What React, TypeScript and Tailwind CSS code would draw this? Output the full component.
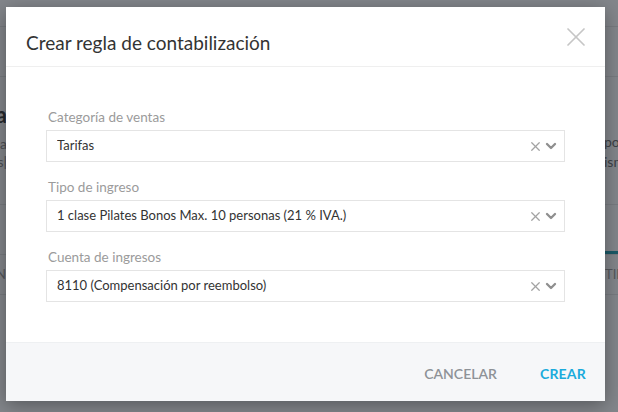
import { ChevronDown, X } from 'lucide-react'

const font = { fontFamily: 'Lato, "Noto Sans", sans-serif' }

function SelectField({ label, value }: { label: string; value: string }) {
  return (
    <div>
      <label className="block text-[13.5px] leading-5 text-[#9b9b9b] mb-[3px] pl-[2px]">{label}</label>
      <div className="h-8 flex items-center border border-[#e4e4e4] pl-[10px] pr-[5px]">
        <span className="flex-1 text-[13px] text-[#333] truncate">{value}</span>
        <X size={15} strokeWidth={2} className="text-[#a3a3a3]" />
        <ChevronDown size={16} strokeWidth={3.5} className="text-[#8f8f8f]" />
      </div>
    </div>
  )
}

function Backdrop() {
  // page behind the dialog, only its edges show
  return (
    <div className="absolute inset-0 bg-white flex flex-col text-[#333]">
      <div className="h-[27px] border-b border-[#e6e6e6]" />
      <div className="h-[50px] border-b border-[#e6e6e6]" />
      <div className="h-[128px] flex justify-between border-b border-[#e6e6e6]">
        <div className="w-[7px] overflow-hidden flex flex-col items-end pt-[24px]">
          <span className="text-[22px] font-bold leading-7 whitespace-nowrap">Tarifa</span>
          <span className="text-[14px] leading-[18px] text-[#888] mt-[6px] whitespace-nowrap">ventana</span>
          <span className="text-[14px] leading-[18px] text-[#888] whitespace-nowrap">cambios|</span>
        </div>
        <div className="w-[14px] overflow-hidden flex flex-col pt-[55px] text-[14px] leading-[20px] text-[#666]">
          <span className="whitespace-nowrap">pocas</span>
          <span className="whitespace-nowrap">isma</span>
        </div>
      </div>
      <div className="h-[50px] flex justify-end border-b border-[#e6e6e6]">
        <div className="w-[14px] border-b-[3px] border-[#1a9bb0]" />
      </div>
      <div className="h-[40px] flex justify-between items-center border-b border-[#e6e6e6] text-[13px] text-[#999]">
        <div className="w-[6px] overflow-hidden flex justify-end"><span className="whitespace-nowrap">EN</span></div>
        <div className="w-[13px] overflow-hidden"><span className="whitespace-nowrap">TIPO</span></div>
      </div>
    </div>
  )
}

export default function App() {
  return (
    <div className="relative w-[618px] h-[412px] overflow-hidden" style={font}>
      <Backdrop />
      <div className="absolute inset-0 bg-[#1d232b]/55" />
      <div className="absolute left-[6px] top-[7px] w-[599px] bg-white shadow-[0_4px_18px_rgba(0,0,0,0.35)] flex flex-col">
        <div className="flex items-start justify-between pl-5 pr-[13px] pt-[22px] pb-[9px] border-b border-[#efefef]">
          <h2 className="text-[19px] leading-7 text-[#333]">Crear regla de contabilización</h2>
          <button className="-mt-[8px] text-[#c6c6c6]">
            <X size={32} strokeWidth={1.3} />
          </button>
        </div>
        <div className="px-10 pt-[40px] pb-10 flex flex-col gap-[15px]">
          <SelectField label="Categoría de ventas" value="Tarifas" />
          <SelectField label="Tipo de ingreso" value="1 clase Pilates Bonos Max. 10 personas (21 % IVA.)" />
          <SelectField label="Cuenta de ingresos" value="8110 (Compensación por reembolso)" />
        </div>
        <div className="h-[59px] bg-[#f6f7f9] border-t border-[#eef0f2] flex items-center justify-end gap-[43px] pr-[19px] pt-[2px]">
          <button className="text-[14px] font-semibold text-[#8e9297]">CANCELAR</button>
          <button className="text-[14px] font-bold tracking-[0.2px] text-[#1aabdc]">CREAR</button>
        </div>
      </div>
    </div>
  )
}
